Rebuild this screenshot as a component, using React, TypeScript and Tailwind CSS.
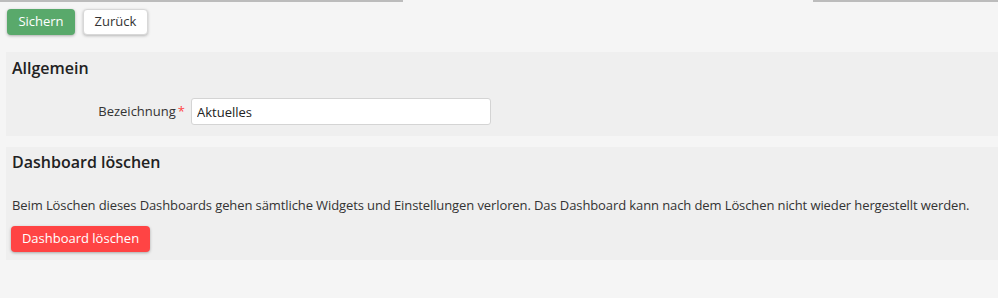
import React from "react";

// Dashboard settings form: save/back toolbar, general section, delete section

const font = "font-['Open_Sans','Liberation_Sans',sans-serif]";

export default function App() {
  return (
    <div className={`${font} min-h-[298px] w-full bg-[#f5f5f5] text-[13px] text-[#333]`}>
      {/* Top tab strip border with gap for active tab */}
      <div className="flex h-[2px]">
        <div className="w-[403px] bg-[#bcbcbc]" />
        <div className="w-[410px]" />
        <div className="flex-1 bg-[#bcbcbc]" />
      </div>

      {/* Toolbar */}
      <div className="flex gap-[8px] pl-[7px] pt-[7px]">
        <button className="h-[26px] w-[68px] rounded-[4px] bg-[#59a96b] text-[13px] text-white shadow-[0_1px_3px_rgba(0,0,0,0.3)]">
          Sichern
        </button>
        <button className="h-[26px] w-[65px] rounded-[4px] border border-[#d8d8d8] bg-white text-[13px] text-[#333] shadow-[0_1px_3px_rgba(0,0,0,0.25)]">
          Zurück
        </button>
      </div>

      {/* Allgemein */}
      <section className="ml-[6px] mt-[17px] bg-[#efefef] pb-[11px] pl-[6px] pt-[5px]">
        <h2 className="text-[16px] font-semibold leading-[22px] text-[#222]">Allgemein</h2>
        <div className="mt-[19px] flex items-center">
          <label className="flex w-[173px] justify-end text-[13px] text-[#333]">
            Bezeichnung
            <span className="ml-[2px] text-[#ff4444]">*</span>
          </label>
          <input
            className="ml-[6px] h-[27px] w-[300px] rounded-[3px] border border-[#d4d4d4] bg-white px-[5px] text-[13px] text-[#222] outline-none"
            defaultValue="Aktuelles"
          />
        </div>
      </section>

      {/* Dashboard löschen */}
      <section className="ml-[6px] mt-[11px] bg-[#efefef] pb-[8px] pl-[6px] pt-[4px]">
        <h2 className="text-[16px] font-semibold leading-[22px] text-[#222]">Dashboard löschen</h2>
        <p className="mt-[23px] leading-[18px] tracking-[-0.1px]">
          Beim Löschen dieses Dashboards gehen sämtliche Widgets und Einstellungen verloren. Das Dashboard kann nach dem Löschen nicht wieder hergestellt werden.
        </p>
        <button className="-ml-px mt-[12px] h-[26px] w-[139px] rounded-[4px] bg-[#ff4444] text-[13px] text-white shadow-[0_1px_3px_rgba(0,0,0,0.3)]">
          Dashboard löschen
        </button>
      </section>
    </div>
  );
}
